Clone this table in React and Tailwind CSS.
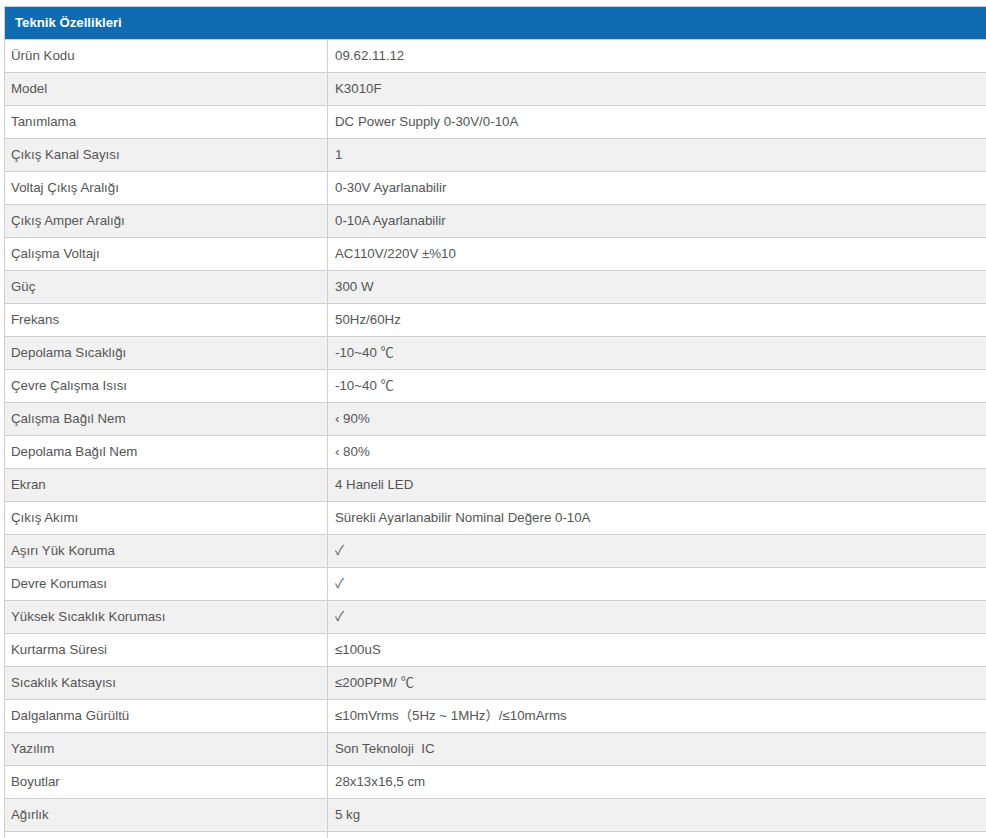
import React from "react";

const rows = [
  ["Ürün Kodu", "09.62.11.12"],
  ["Model", "K3010F"],
  ["Tanımlama", "DC Power Supply 0-30V/0-10A"],
  ["Çıkış Kanal Sayısı", "1"],
  ["Voltaj Çıkış Aralığı", "0-30V Ayarlanabilir"],
  ["Çıkış Amper Aralığı", "0-10A Ayarlanabilir"],
  ["Çalışma Voltajı", "AC110V/220V ±%10"],
  ["Güç", "300 W"],
  ["Frekans", "50Hz/60Hz"],
  ["Depolama Sıcaklığı", "-10~40 ℃"],
  ["Çevre Çalışma Isısı", "-10~40 ℃"],
  ["Çalışma Bağıl Nem", "‹ 90%"],
  ["Depolama Bağıl Nem", "‹ 80%"],
  ["Ekran", "4 Haneli LED"],
  ["Çıkış Akımı", "Sürekli Ayarlanabilir Nominal Değere 0-10A"],
  ["Aşırı Yük Koruma", "✓"],
  ["Devre Koruması", "✓"],
  ["Yüksek Sıcaklık Koruması", "✓"],
  ["Kurtarma Süresi", "≤100uS"],
  ["Sıcaklık Katsayısı", "≤200PPM/ ℃"],
  ["Dalgalanma Gürültü", "≤10mVrms（5Hz ~ 1MHz）/≤10mArms"],
  ["Yazılım", "Son Teknoloji  IC"],
  ["Boyutlar", "28x13x16,5 cm"],
  ["Ağırlık", "5 kg"],
  ["", ""],
];

export default function App() {
  return (
    <div
      className="w-[986px] h-[838px] overflow-hidden bg-white"
      style={{ fontFamily: '"Liberation Sans", Arial, "Noto Sans CJK SC", sans-serif' }}
    >
      <div className="ml-[4px] mt-[6px] w-[1000px] border-l border-t border-[#cfcfcf]">
        <div className="h-[33px] bg-[#0f6cb3] border-b border-[#cfcfcf] flex items-center pl-[10px] text-[13.2px] font-bold text-white">
          Teknik Özellikleri
        </div>
        {rows.map(([k, v], i) => (
          <div
            key={i}
            className={`flex h-[33px] border-b border-[#cfcfcf] text-[13.3px] text-[#555555] ${
              i % 2 === 1 ? "bg-[#f1f1f1]" : "bg-white"
            }`}
          >
            <div className="w-[323px] shrink-0 border-r border-[#cfcfcf] flex items-center pl-[6px]">
              {k}
            </div>
            <div className="flex-1 flex items-center pl-[7px] whitespace-pre">{v}</div>
          </div>
        ))}
      </div>
    </div>
  );
}
